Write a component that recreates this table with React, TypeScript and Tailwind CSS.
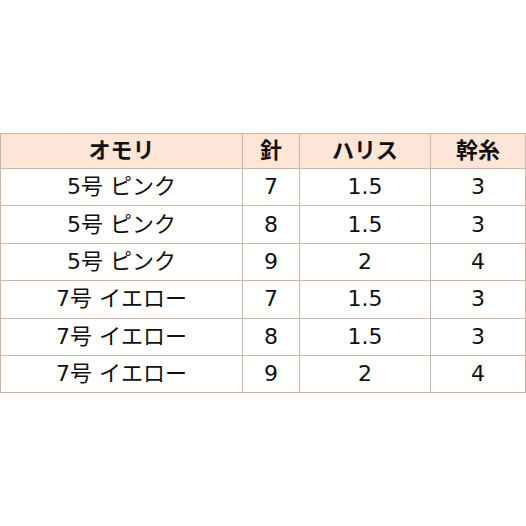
const rows = [
  ["5号 ピンク", "7", "1.5", "3"],
  ["5号 ピンク", "8", "1.5", "3"],
  ["5号 ピンク", "9", "2", "4"],
  ["7号 イエロー", "7", "1.5", "3"],
  ["7号 イエロー", "8", "1.5", "3"],
  ["7号 イエロー", "9", "2", "4"],
];

export default function App() {
  return (
    <div
      className="w-[526px] h-[526px] bg-white pt-[133px] text-[#111]"
      style={{ fontFamily: "'DejaVu Sans', 'Noto Sans CJK JP', sans-serif" }}
    >
      <table className="border-collapse table-fixed w-[525px] text-[22px]">
        <colgroup>
          <col className="w-[242px]" />
          <col className="w-[57px]" />
          <col className="w-[131px]" />
          <col className="w-[95px]" />
        </colgroup>
        <thead>
          <tr className="bg-[#fde6d8] h-[35px]">
            {["オモリ", "針", "ハリス", "幹糸"].map((h) => (
              <th key={h} className="border border-[#cfb6a2] font-bold text-center p-0 leading-none">
                {h}
              </th>
            ))}
          </tr>
        </thead>
        <tbody>
          {rows.map((r, i) => (
            <tr key={i} className="h-[37.4px]">
              {r.map((c, j) => (
                <td key={j} className="border border-[#cfb6a2] text-center p-0 leading-none">
                  {c}
                </td>
              ))}
            </tr>
          ))}
        </tbody>
      </table>
    </div>
  );
}
